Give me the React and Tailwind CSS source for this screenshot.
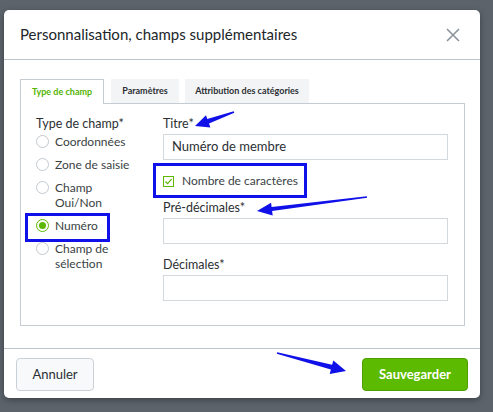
import React from "react";

function arrowPoints(tx, ty, hx, hy, headLen = 14, headW = 13, tailW = 1.5, neckW = 5) {
  const dx = hx - tx, dy = hy - ty;
  const L = Math.hypot(dx, dy);
  const ux = dx / L, uy = dy / L;
  const px = -uy, py = ux;
  const bx = hx - ux * headLen, by = hy - uy * headLen;
  const p = (x, y) => `${x.toFixed(1)},${y.toFixed(1)}`;
  return [
    p(tx + px * tailW / 2, ty + py * tailW / 2),
    p(bx + px * neckW / 2, by + py * neckW / 2),
    p(bx + px * headW / 2, by + py * headW / 2),
    p(hx, hy),
    p(bx - px * headW / 2, by - py * headW / 2),
    p(bx - px * neckW / 2, by - py * neckW / 2),
    p(tx - px * tailW / 2, ty - py * tailW / 2),
  ].join(" ");
}

function Radio({ checked, children }) {
  return (
    <div className="flex items-start gap-[6px]">
      <span
        className={
          "mt-[1px] flex h-[13px] w-[13px] shrink-0 items-center justify-center rounded-full border bg-white " +
          (checked ? "border-[#5cb800]" : "border-[#c3c9cf]")
        }
      >
        {checked && <span className="h-[7px] w-[7px] rounded-full bg-[#5cb800]" />}
      </span>
      <span className="leading-[15px]">{children}</span>
    </div>
  );
}

function Field({ label, value }) {
  return (
    <div className="flex flex-col">
      <div className="text-[12.5px] leading-[16px] text-[#2b2f33]">{label}</div>
      <div className="mt-[2px] flex h-[26px] items-center border border-[#d3d8dd] bg-white px-[8px] text-[13px] text-[#2b2f33]">
        {value}
      </div>
    </div>
  );
}

export default function App() {
  const blue = "#1010e8";
  return (
    <div
      className="relative h-[412px] w-[493px] overflow-hidden bg-[#5c636b]"
      style={{ fontFamily: "Lato, 'Noto Sans', sans-serif" }}
    >
      <div className="absolute left-[4px] top-[10px] flex h-[388px] w-[476px] flex-col rounded-[5px] bg-white shadow-[0_2px_6px_rgba(0,0,0,0.35)]">
        {/* header */}
        <div className="flex h-[50px] shrink-0 items-center justify-between border-b border-[#bcc4cc] pl-[16px] pr-[20px]">
          <h1 className="text-[15px] text-[#22262a]">Personnalisation, champs supplémentaires</h1>
          <svg width="14" height="14" viewBox="0 0 14 14">
            <path d="M1 1L13 13M13 1L1 13" stroke="#8b949d" strokeWidth="1.6" />
          </svg>
        </div>
        {/* body */}
        <div className="flex-1 pl-[16px] pr-[15px] pt-[19px]">
          <div className="flex h-[24px] items-end gap-[7px]">
            <div className="relative z-10 -mb-px flex h-[25px] w-[84px] items-center justify-center border border-b-0 border-[#c5ccd3] bg-white text-[9px] font-bold text-[#55b400]">
              Type de champ
            </div>
            <div className="flex h-[24px] w-[68px] items-center justify-center bg-[#f3f4f6] text-[9px] font-bold text-[#2b2f33]">
              Paramètres
            </div>
            <div className="ml-[-1px] flex h-[24px] w-[124px] items-center justify-center bg-[#f3f4f6] text-[9px] font-bold text-[#2b2f33]">
              Attribution des catégories
            </div>
          </div>
          <div className="flex h-[223px] border border-[#c5ccd3] pl-[15px] pr-[16px] pt-[12px]">
            <div className="flex w-[127px] shrink-0 flex-col text-[12px] text-[#3a3f44]">
              <div className="text-[12.5px] leading-[16px] text-[#2b2f33]">Type de champ*</div>
              <div className="mt-[2px] flex flex-col gap-[8px]">
                <Radio>Coordonnées</Radio>
                <Radio>Zone de saisie</Radio>
                <Radio>
                  Champ
                  <br />
                  Oui/Non
                </Radio>
                <Radio checked>Numéro</Radio>
                <Radio>
                  Champ de
                  <br />
                  sélection
                </Radio>
              </div>
            </div>
            <div className="flex flex-1 flex-col">
              <Field label="Titre*" value="Numéro de membre" />
              <div className="mt-[13px] flex items-center gap-[8px] text-[12px] text-[#3a3f44]">
                <span className="flex h-[11px] w-[11px] items-center justify-center border border-[#5cb800] bg-white">
                  <svg width="9" height="9" viewBox="0 0 9 9">
                    <path d="M1.5 4.5L3.6 6.6L7.6 2.2" fill="none" stroke="#5cb800" strokeWidth="1.2" />
                  </svg>
                </span>
                <span className="leading-[16px]">Nombre de caractères</span>
              </div>
              <div className="mt-[11px]">
                <Field label="Pré-décimales*" value="" />
              </div>
              <div className="mt-[13px]">
                <Field label="Décimales*" value="" />
              </div>
            </div>
          </div>
        </div>
        {/* footer */}
        <div className="flex h-[50px] shrink-0 items-start justify-between border-t border-[#bcc4cc] px-[12px] pt-[9px]">
          <button className="h-[33px] w-[78px] rounded-[4px] border border-[#c9d0d6] bg-[#f8f9fa] text-[13px] text-[#2b2f33]">
            Annuler
          </button>
          <button className="h-[33px] w-[106px] rounded-[4px] border border-[#4f9e00] bg-[#5cbb00] text-[13px] font-bold text-white">
            Sauvegarder
          </button>
        </div>
      </div>

      {/* annotations */}
      <div className="absolute left-[25px] top-[213px] h-[29px] w-[85px] border-[3px] border-[#1010e8]" />
      <div className="absolute left-[153px] top-[163px] h-[35px] w-[154px] border-[3px] border-[#1010e8]" />
      <svg className="pointer-events-none absolute left-0 top-0" width="493" height="412">
        <polygon points={arrowPoints(234, 112, 195, 126)} fill={blue} />
        <polygon points={arrowPoints(367, 197, 257, 211, 15, 13, 1.5, 4)} fill={blue} />
        <polygon points={arrowPoints(277, 353, 346, 371, 15, 14, 1.5, 5)} fill={blue} />
      </svg>
    </div>
  );
}
